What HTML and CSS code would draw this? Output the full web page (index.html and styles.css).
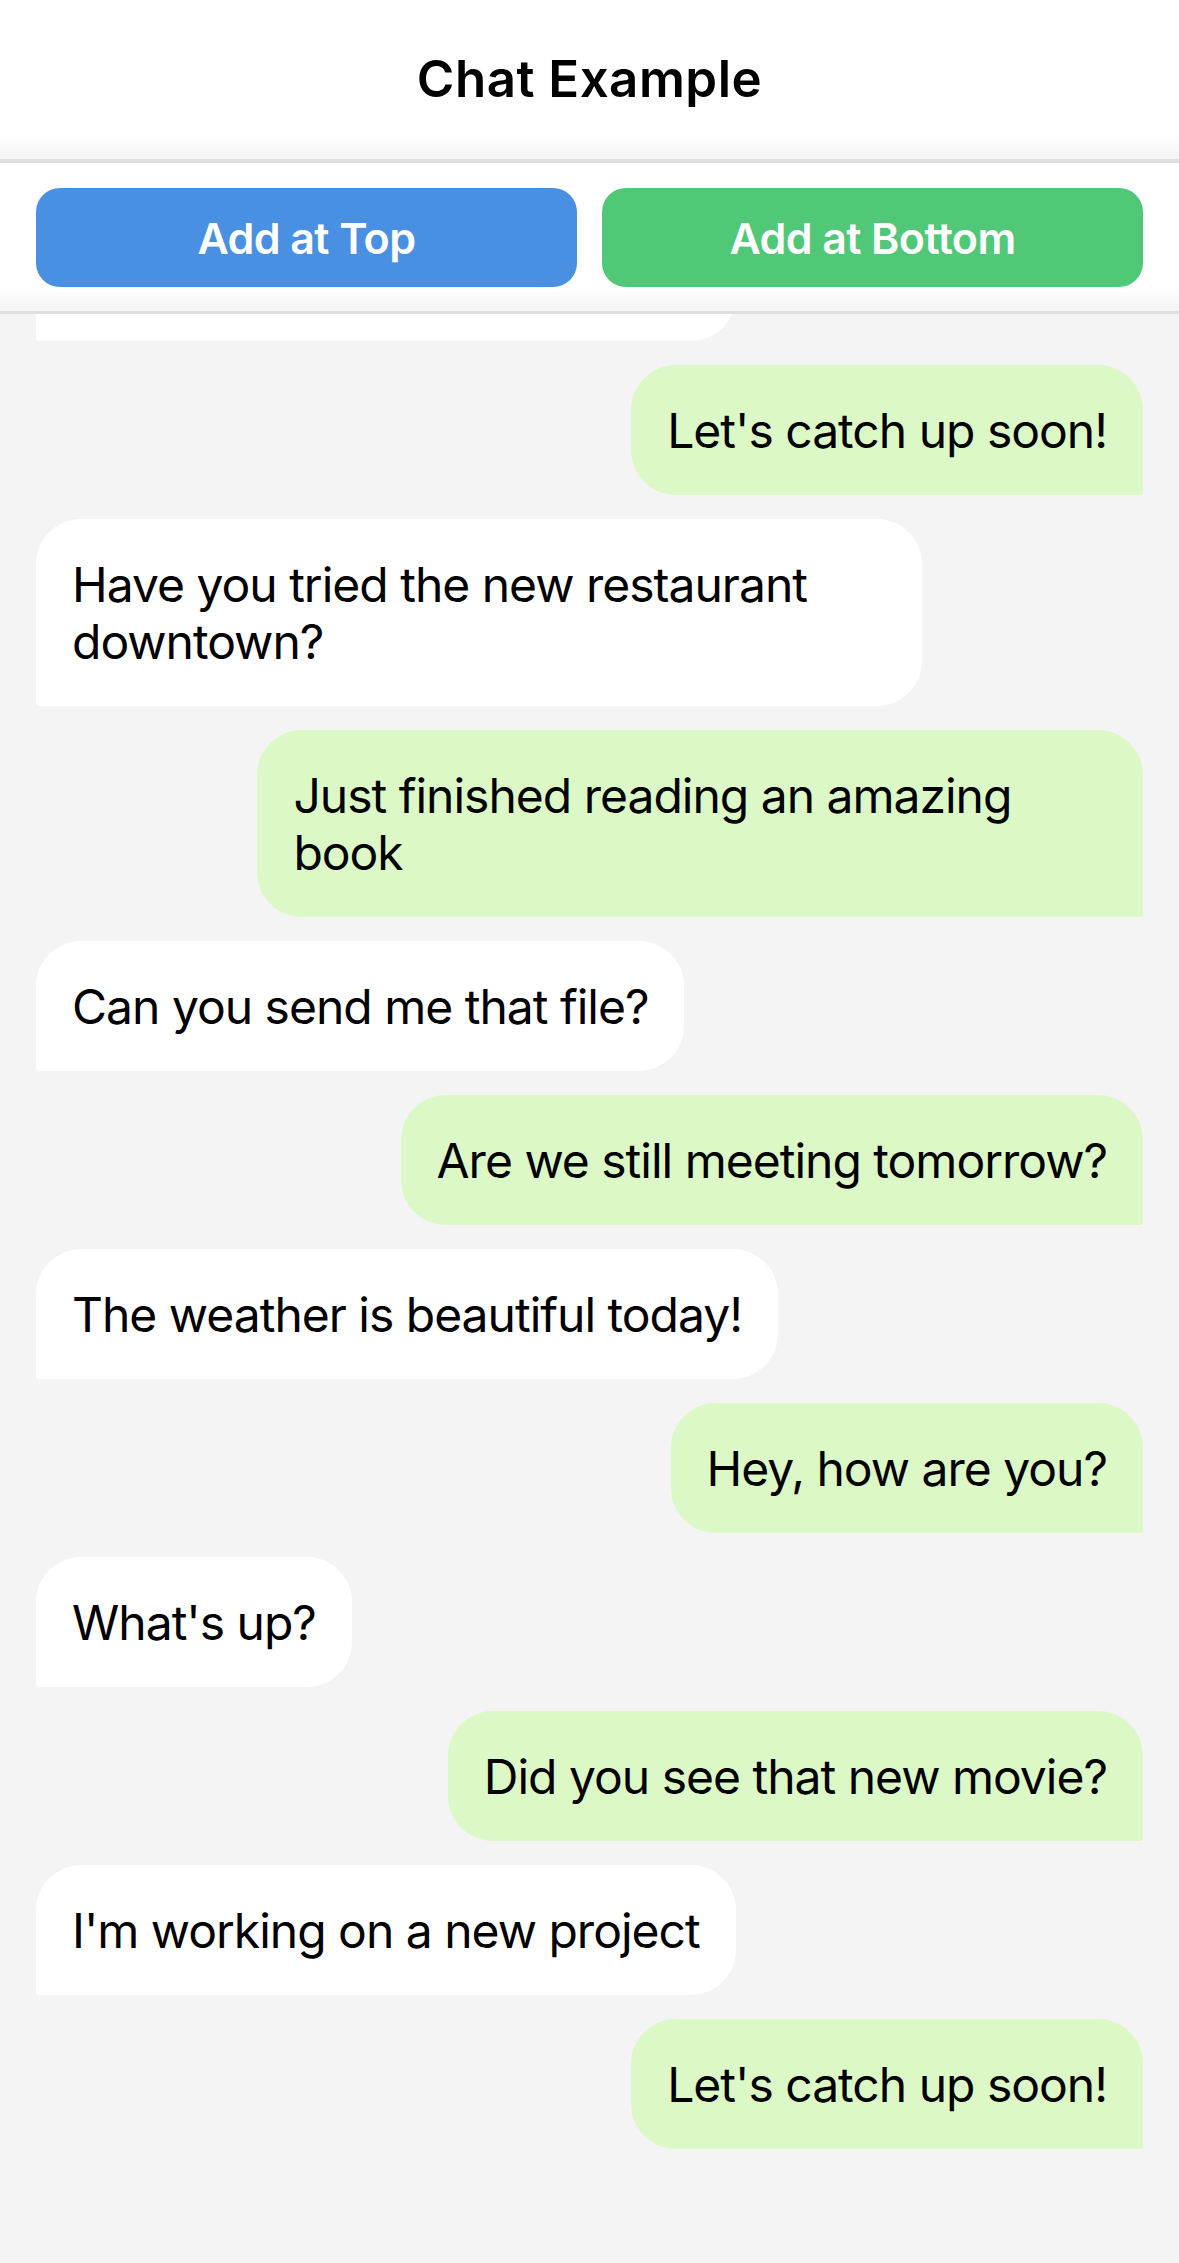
FILE: index.html
```html
<!DOCTYPE html>
<html lang="en">
<head>
<meta charset="utf-8">
<title>Chat Example</title>
<link rel="stylesheet" href="styles.css">
</head>
<body>
<div class="app">
  <header class="header">
    <h1 class="title">Chat Example</h1>
  </header>
  <div class="actions">
    <button class="btn btn-top">Add at Top</button>
    <button class="btn btn-bottom">Add at Bottom</button>
  </div>
  <main class="chat" id="chat">
    <div class="list">
      <div class="msg msg-in">I'm working on a new project</div>
      <div class="msg msg-out">Let's catch up soon!</div>
      <div class="msg msg-in">Have you tried the new restaurant downtown?</div>
      <div class="msg msg-out">Just finished reading an amazing book</div>
      <div class="msg msg-in">Can you send me that file?</div>
      <div class="msg msg-out">Are we still meeting tomorrow?</div>
      <div class="msg msg-in">The weather is beautiful today!</div>
      <div class="msg msg-out">Hey, how are you?</div>
      <div class="msg msg-in">What's up?</div>
      <div class="msg msg-out">Did you see that new movie?</div>
      <div class="msg msg-in">I'm working on a new project</div>
      <div class="msg msg-out">Let's catch up soon!</div>
    </div>
  </main>
</div>
<script src="script.js"></script>
</body>
</html>
```
FILE: styles.css
```css
* { box-sizing: border-box; }
html, body {
  margin: 0;
  padding: 0;
  width: 1179px;
  height: 2263px;
  overflow: hidden;
  background: #f4f4f4;
  font-family: Inter, "Noto Sans", "Liberation Sans", sans-serif;
  color: #000;
}
.app {
  display: flex;
  flex-direction: column;
  height: 2263px;
}
.header {
  height: 163px;
  flex: none;
  display: flex;
  align-items: center;
  justify-content: center;
  background: linear-gradient(to bottom, #ffffff 0px, #ffffff 136px, #f4f4f4 158px);
  border-bottom: 4px solid #dfdfdf;
  padding-bottom: 2px;
}
.title {
  margin: 0;
  font-size: 51px;
  font-weight: 600;
  letter-spacing: 0.5px;
}
.actions {
  flex: none;
  display: flex;
  gap: 25px;
  padding: 25px 36px 24px;
  height: 151px;
  background: linear-gradient(to bottom, #ffffff 0px, #ffffff 126px, #f4f4f4 146px);
  border-bottom: 3px solid #dfdfdf;
}
.btn {
  flex: 1;
  height: 99px;
  border: none;
  border-radius: 24px;
  color: #fff;
  font-family: Inter, "Noto Sans", "Liberation Sans", sans-serif;
  font-size: 43px;
  font-weight: 600;
  letter-spacing: -0.6px;
  padding: 0;
}
.btn-top { background: #4a90e2; }
.btn-bottom { background: #50c878; }
.chat {
  flex: 1;
  overflow: hidden;
  background: #f4f4f4;
}
.list {
  display: flex;
  flex-direction: column;
  gap: 24px;
  padding: 0 36px 114px;
}
.msg {
  max-width: 80%;
  padding: 36.5px 36px;
  font-size: 48px;
  line-height: 57px;
  letter-spacing: -1px;
}
.msg-in {
  align-self: flex-start;
  background: #ffffff;
  border-radius: 45px 45px 45px 3px;
}
.msg-out {
  align-self: flex-end;
  background: #dcf8c6;
  border-radius: 45px 45px 3px 45px;
}
```
FILE: script.js
```js
var chat = document.getElementById('chat');
chat.scrollTop = chat.scrollHeight - chat.clientHeight;
```
